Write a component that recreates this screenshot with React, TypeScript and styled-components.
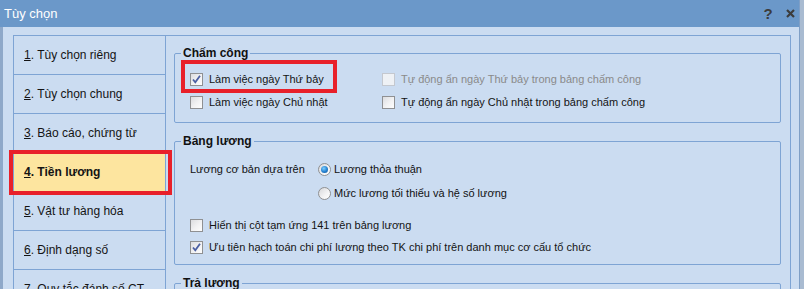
import styled, { createGlobalStyle } from 'styled-components';

const GlobalStyle = createGlobalStyle`
  html, body {
    margin: 0;
    padding: 0;
    width: 804px;
    height: 289px;
    overflow: hidden;
    background: #a9bbd1;
  }
  * {
    box-sizing: border-box;
  }
`;

const Window = styled.div`
  width: 800px;
  height: 289px;
  display: flex;
  flex-direction: column;
  background: #cbdcf1;
  font-family: 'Liberation Sans', Arial, sans-serif;
  font-size: 11px;
  color: #111;
  overflow: hidden;
  border-right: 1px solid #7f9fc6;
`;

const TitleBar = styled.div`
  height: 27px;
  flex: none;
  display: flex;
  align-items: center;
  padding: 0 0 0 4px;
  background: #6b98c9;
  color: #fff;
  font-size: 13px;
`;

const Title = styled.span`
  flex: 1;
`;

const TitleButton = styled.span<{ $w: number }>`
  width: ${(p) => p.$w}px;
  display: flex;
  justify-content: center;
  color: #3c3c3c;
  font-weight: bold;
  font-size: 15px;
`;

const Body = styled.div`
  flex: 1;
  min-height: 0;
  border-left: 3px solid #8ea8c9;
  padding: 8px 8px 0 10px;
`;

const Panel = styled.div`
  display: flex;
  height: 100%;
  border: 1px solid #7ea4d4;
  border-bottom: none;
`;

const Nav = styled.div`
  width: 152px;
  flex: none;
  border-right: 1px solid #7ea4d4;
  display: flex;
  flex-direction: column;
`;

const NavItem = styled.div<{ $active?: boolean }>`
  position: relative;
  height: 39px;
  flex: none;
  display: flex;
  align-items: center;
  padding-left: 10px;
  border-bottom: 1px solid #7ea4d4;
  font-size: 12px;
  font-weight: ${(p) => (p.$active ? 'bold' : 'normal')};
  background: ${(p) => (p.$active ? '#fde59f' : 'transparent')};
  color: #141414;
`;

const Highlight = styled.div<{ $l: number; $t: number; $w: number; $h: number }>`
  position: absolute;
  left: ${(p) => p.$l}px;
  top: ${(p) => p.$t}px;
  width: ${(p) => p.$w}px;
  height: ${(p) => p.$h}px;
  border: 4px solid #e8202a;
  pointer-events: none;
`;

const Content = styled.div`
  flex: 1;
  padding: 10px 9px 0 8px;
  display: flex;
  flex-direction: column;
  gap: 11px;
`;

const Group = styled.fieldset<{ $h?: number }>`
  margin: 0;
  padding: 0 0 0 15px;
  border: 1px solid #7ea4d4;
  border-radius: 2px;
  min-width: 0;
  ${(p) => (p.$h ? `height: ${p.$h}px;` : '')}
  flex: none;
`;

const Legend = styled.legend`
  margin-left: -9px;
  padding: 0 2px;
  font-weight: bold;
  font-size: 12px;
  line-height: 15px;
  color: #111;
`;

const CheckGrid = styled.div`
  display: grid;
  grid-template-columns: 192px auto;
  grid-auto-rows: 23px;
  padding-top: 7px;
`;

const CheckRow = styled.label<{ $disabled?: boolean }>`
  position: relative;
  display: flex;
  align-items: center;
  gap: 6px;
  height: 22px;
  flex: none;
  color: ${(p) => (p.$disabled ? '#8a8a8a' : '#141414')};
  white-space: nowrap;
`;

const Box = styled.span<{ $disabled?: boolean }>`
  width: 13px;
  height: 13px;
  flex: none;
  display: flex;
  align-items: center;
  justify-content: center;
  border: 1px solid ${(p) => (p.$disabled ? '#c4c8cf' : '#8f9092')};
  background: ${(p) =>
    p.$disabled
      ? '#eef1f5'
      : 'linear-gradient(135deg, #dcdde0 0%, #f2f2f3 55%, #fdfdfd 100%)'};
`;

const SalaryRow = styled.div`
  display: flex;
  padding-top: 8px;
`;

const SalaryLabel = styled.div`
  width: 128px;
  height: 24px;
  display: flex;
  align-items: center;
`;

const RadioList = styled.div`
  display: flex;
  flex-direction: column;
`;

const RadioRow = styled.label`
  display: flex;
  align-items: center;
  gap: 3px;
  height: 24px;
  white-space: nowrap;
`;

const RadioDot = styled.span<{ $on?: boolean }>`
  width: 13px;
  height: 13px;
  flex: none;
  border-radius: 50%;
  border: 1px solid #8f9092;
  background: linear-gradient(135deg, #d7d8db 0%, #f4f4f5 60%, #ffffff 100%);
  display: flex;
  align-items: center;
  justify-content: center;
  &::after {
    content: '';
    display: ${(p) => (p.$on ? 'block' : 'none')};
    width: 7px;
    height: 7px;
    border-radius: 50%;
    background: radial-gradient(circle at 40% 35%, #7fd0ff 0%, #2a86d4 50%, #0f4f94 100%);
  }
`;

const CheckList = styled.div`
  display: flex;
  flex-direction: column;
  padding-top: 9px;
`;

function Check({ on, disabled }: { on?: boolean; disabled?: boolean }) {
  return (
    <Box $disabled={disabled}>
      {on && (
        <svg width="11" height="11" viewBox="0 0 11 11">
          <path d="M2 5.5 L4.3 8.3 L9 1.8" stroke="#4b5fa3" strokeWidth="1.8" fill="none" />
        </svg>
      )}
    </Box>
  );
}

const navItems = [
  { n: '1', label: '. Tùy chọn riêng' },
  { n: '2', label: '. Tùy chọn chung' },
  { n: '3', label: '. Báo cáo, chứng từ' },
  { n: '4', label: '. Tiền lương', active: true },
  { n: '5', label: '. Vật tư hàng hóa' },
  { n: '6', label: '. Định dạng số' },
  { n: '7', label: '. Quy tắc đánh số CT' },
];

export default function App() {
  return (
    <>
      <GlobalStyle />
      <Window>
        <TitleBar>
          <Title>Tùy chọn</Title>
          <TitleButton $w={26}>?</TitleButton>
          <TitleButton $w={18}>
            <svg width="9" height="9" viewBox="0 0 9 9">
              <path d="M1 1 L8 8 M8 1 L1 8" stroke="#3c3c3c" strokeWidth="2.2" />
            </svg>
          </TitleButton>
        </TitleBar>
        <Body>
          <Panel>
            <Nav>
              {navItems.map((it) => (
                <NavItem key={it.n} $active={it.active}>
                  <span>
                    <u>{it.n}</u>
                    {it.label}
                  </span>
                  {it.active && <Highlight $l={-5} $t={-3} $w={163} $h={45} />}
                </NavItem>
              ))}
            </Nav>
            <Content>
              <Group $h={77}>
                <Legend>Chấm công</Legend>
                <CheckGrid>
                  <CheckRow>
                    <Check on />
                    Làm việc ngày Thứ bảy
                    <Highlight $l={-9} $t={-8} $w={156} $h={33} />
                  </CheckRow>
                  <CheckRow $disabled>
                    <Check disabled />
                    Tự động ẩn ngày Thứ bảy trong bảng chấm công
                  </CheckRow>
                  <CheckRow>
                    <Check />
                    Làm việc ngày Chủ nhật
                  </CheckRow>
                  <CheckRow>
                    <Check />
                    Tự động ẩn ngày Chủ nhật trong bảng chấm công
                  </CheckRow>
                </CheckGrid>
              </Group>
              <Group $h={131}>
                <Legend>Bảng lương</Legend>
                <SalaryRow>
                  <SalaryLabel>Lương cơ bản dựa trên</SalaryLabel>
                  <RadioList>
                    <RadioRow>
                      <RadioDot $on />
                      Lương thỏa thuận
                    </RadioRow>
                    <RadioRow>
                      <RadioDot />
                      Mức lương tối thiểu và hệ số lương
                    </RadioRow>
                  </RadioList>
                </SalaryRow>
                <CheckList>
                  <CheckRow>
                    <Check />
                    Hiển thị cột tạm ứng 141 trên bảng lương
                  </CheckRow>
                  <CheckRow>
                    <Check on />
                    Ưu tiên hạch toán chi phí lương theo TK chi phí trên danh mục cơ cấu tổ chức
                  </CheckRow>
                </CheckList>
              </Group>
              <Group $h={60}>
                <Legend>Trả lương</Legend>
              </Group>
            </Content>
          </Panel>
        </Body>
      </Window>
    </>
  );
}
